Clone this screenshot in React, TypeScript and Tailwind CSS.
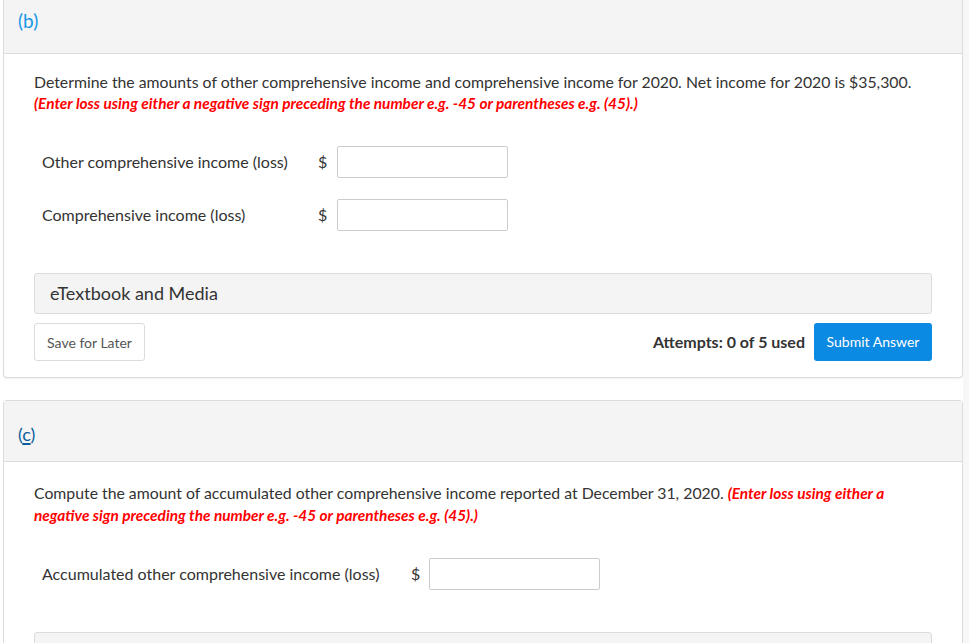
import React from "react";

const font = { fontFamily: "Lato, 'Open Sans', sans-serif" };

function Row({ label, labelW, dollarW }: { label: string; labelW: string; dollarW: string }) {
  return (
    <div className="flex items-center pl-[8px]">
      <div className={`${labelW} text-[16px] text-[#333]`}>{label}</div>
      <div className={`${dollarW} text-[16px] text-[#333]`}>$</div>
      <div className="h-[32px] w-[171px] rounded-[2px] border border-[#ccc] bg-white" />
    </div>
  );
}

export default function App() {
  return (
    <div className="flex min-h-[643px] w-[969px] bg-white" style={font}>
      <div className="w-[963px] pl-[3px]">
        {/* Card b */}
        <div className="rounded-b-[4px] border-x border-b border-[#dcdcdc] bg-white shadow-[0_1px_2px_rgba(0,0,0,0.06)]">
          <div className="h-[54px] border-b border-[#dcdcdc] bg-[#f4f4f4] pl-[14px] pt-[8px]">
            <span className="text-[19px] leading-[26px] text-[#1a98e6]">(b)</span>
          </div>
          <div className="px-[30px] pb-[16px] pt-[17px]">
            <p className="text-[15.8px] leading-[22px] text-[#333]">
              Determine the amounts of other comprehensive income and comprehensive income for 2020. Net income for 2020 is $35,300.
            </p>
            <p className="text-[15.4px] font-bold italic leading-[20px] text-[#ff0000]">
              (Enter loss using either a negative sign preceding the number e.g. -45 or parentheses e.g. (45).)
            </p>
            <div className="mt-[33px] flex flex-col gap-[21px]">
              <Row label="Other comprehensive income (loss)" labelW="w-[276px]" dollarW="w-[19px]" />
              <Row label="Comprehensive income (loss)" labelW="w-[276px]" dollarW="w-[19px]" />
            </div>
            <div className="mt-[42px] flex h-[41px] items-center rounded-[3px] border border-[#dcdcdc] bg-[#f4f4f4] pl-[15px] text-[18px] text-[#333]">
              eTextbook and Media
            </div>
            <div className="mt-[9px] flex items-center justify-between">
              <button className="h-[38px] w-[111px] rounded-[3px] border border-[#dcdcdc] bg-white text-[14px] text-[#555]">
                Save for Later
              </button>
              <div className="flex items-center gap-[9px]">
                <span className="text-[16px] font-bold text-[#333]">Attempts: 0 of 5 used</span>
                <button className="h-[38px] w-[118px] rounded-[3px] bg-[#0a8ae2] pb-[2px] text-[14px] text-white">
                  Submit Answer
                </button>
              </div>
            </div>
          </div>
        </div>

        {/* Card c */}
        <div className="mt-[22px] rounded-t-[4px] border-x border-t border-[#dcdcdc] bg-white">
          <div className="h-[61px] border-b border-[#dcdcdc] bg-[#f4f4f4] pl-[14px] pt-[20px]">
            <span className="text-[18px] leading-[26px] text-[#0b5e9e]">
              (<span className="underline decoration-[1.5px] underline-offset-[2px]">c</span>)
            </span>
          </div>
          <div className="px-[30px] pt-[20px]">
            <p className="text-[15.8px] leading-[22px] text-[#333]">
              Compute the amount of accumulated other comprehensive income reported at December 31, 2020.{" "}
              <span className="text-[15.4px] font-bold italic text-[#ff0000]">
                (Enter loss using either a negative sign preceding the number e.g. -45 or parentheses e.g. (45).)
              </span>
            </p>
            <div className="mt-[32px]">
              <Row label="Accumulated other comprehensive income (loss)" labelW="w-[369px]" dollarW="w-[18px]" />
            </div>
            <div className="mt-[42px] h-[41px] rounded-t-[3px] border border-[#dcdcdc] bg-[#f4f4f4]" />
          </div>
        </div>
      </div>
      <div className="w-[6px] bg-[#f7f7f7]" />
    </div>
  );
}
